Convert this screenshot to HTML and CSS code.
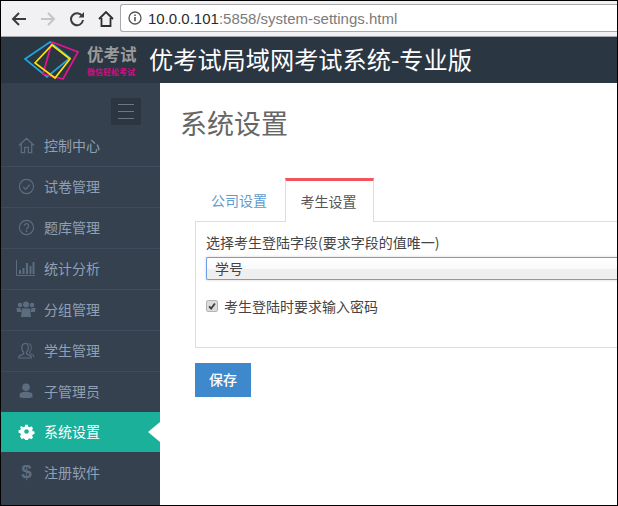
FILE: index.html
```html
<!DOCTYPE html>
<html lang="zh">
<head>
<meta charset="utf-8">
<title>系统设置</title>
<link rel="stylesheet" href="styles.css">
</head>
<body>
<div class="frame">
  <div class="browser">
    <div class="nav-icons">
      <svg class="nav-icon" viewBox="0 0 16 16"><path d="M15 8H2.5M8 2L2 8l6 6" fill="none" stroke="#3c3c3c" stroke-width="2"/></svg>
      <svg class="nav-icon" viewBox="0 0 16 16"><path d="M1 8h12.5M8 2l6 6-6 6" fill="none" stroke="#c4c5c7" stroke-width="2"/></svg>
      <svg class="nav-icon" viewBox="0 0 16 16"><path d="M13.2 5.2A6 6 0 1 0 14 9" fill="none" stroke="#3c3c3c" stroke-width="2"/><path d="M9.5 6.5H15V1z" fill="#3c3c3c"/></svg>
      <svg class="nav-icon" viewBox="0 0 16 16"><path d="M1 8l7-7 7 7M3.5 7v8h9V7" fill="none" stroke="#2e2e2e" stroke-width="1.8"/></svg>
    </div>
    <div class="omnibox">
      <svg class="info" viewBox="0 0 14 14"><circle cx="7" cy="7" r="6" fill="none" stroke="#555" stroke-width="1.3"/><path d="M6.2 6h1.6v4.3H6.2zM6.2 3.4h1.6V5H6.2z" fill="#555"/></svg>
      <span class="host">10.0.0.101</span><span class="path">:5858/system-settings.html</span>
    </div>
  </div>

  <header class="topbar">
    <svg class="logo" viewBox="24 40 56 40">
      <path d="M25 59L50 42 70 58 47 77z" fill="none" stroke="#22a5dc" stroke-width="1.700"/>
      <path d="M52 42L78 52 63 79 43 74z" fill="none" stroke="#e5148c" stroke-width="1.700"/>
      <path d="M35 63L52 45 70 59 55 78z" fill="none" stroke="#ffe600" stroke-width="1.700"/>
    </svg>
    <div class="brand">
      <span class="brand-name">优考试</span>
      <span class="brand-sub">微信轻松考试</span>
    </div>
    <h1 class="app-title">优考试局域网考试系统-专业版</h1>
  </header>

  <div class="workspace">
    <aside class="sidebar">
      <div class="toggle-row">
        <button class="toggle" type="button" aria-label="菜单"><span></span><span></span><span></span></button>
      </div>
      <nav>
        <a class="item">
          <svg class="ico" viewBox="0 0 18 18"><path d="M1 9l8-7.500L17 9M3.500 7.500V16.500h3.500V11h4v5.500h3.500V7.500" fill="none" stroke="#5d6d80" stroke-width="1.300"/></svg>控制中心</a>
        <a class="item">
          <svg class="ico" viewBox="0 0 18 18"><circle cx="9" cy="9" r="7.500" fill="none" stroke="#5d6d80" stroke-width="1.200"/><path d="M5.500 9.500l2.500 2.500 4.500-5" fill="none" stroke="#5d6d80" stroke-width="1.200"/></svg>试卷管理</a>
        <a class="item">
          <svg class="ico" viewBox="0 0 18 18"><circle cx="9" cy="9" r="7.500" fill="none" stroke="#5d6d80" stroke-width="1.200"/><path d="M6.700 7.200a2.300 2.300 0 1 1 3.600 1.900C9.400 9.700 9 10 9 11" fill="none" stroke="#5d6d80" stroke-width="1.300"/><path d="M8.200 12.200h1.600v1.600H8.200z" fill="#5d6d80"/></svg>题库管理</a>
        <a class="item">
          <svg class="ico wide" viewBox="0 0 20 18"><path d="M.5 1v15.500H19" fill="none" stroke="#5d6d80"/><path d="M3 11h2v4H3zM6.500 9h2v6h-2zM10 4h2v11h-2zM13.500 7h2v8h-2zM16.500 3h2v12h-2z" fill="#5d6d80"/></svg>统计分析</a>
        <a class="item">
          <svg class="ico wide" viewBox="0 0 20 18"><circle cx="4" cy="5" r="2.300" fill="#5d6d80"/><circle cx="16" cy="5" r="2.300" fill="#5d6d80"/><circle cx="10" cy="4.500" r="3" fill="#5d6d80"/><path d="M.5 8h4l1 4H1zM15.500 8h4l-.5 4h-4.500zM6 8.500h8l1 8.500H5z" fill="#5d6d80"/></svg>分组管理</a>
        <a class="item">
          <svg class="ico" viewBox="0 0 18 18"><path d="M8 1.500c-3 0-4.200 2.400-4 5 .2 2 1 3.500 2 4.500v1.500L1 15v2h13v-2l-5-2.500V11c1-1 1.800-2.500 2-4.500.2-2.600-1-5-3-5z" fill="none" stroke="#5d6d80" stroke-width="1.200"/><path d="M11 1.500c2.500.5 3.500 2.800 3 5.500-.2 1.200-.8 2.500-1.500 3.500v1.500l4 2v2" fill="none" stroke="#5d6d80" stroke-width="1"/></svg>学生管理</a>
        <a class="item">
          <svg class="ico" viewBox="0 0 18 18"><circle cx="8.500" cy="4.500" r="4" fill="#5d6d80"/><path d="M2.500 10.500q6-2.500 12 0 .800.500.800 2v2.500q-6.800 2-13.600 0v-2.500q0-1.500.800-2z" fill="#5d6d80"/></svg>子管理员</a>
        <a class="item active">
          <svg class="ico" viewBox="0 0 18 18"><path d="M7.400 1h3.200l.5 2.300 1.700.7 2-1.300 2.200 2.300-1.200 2 .7 1.700 2.200.5v3l-2.200.5-.7 1.700 1.200 2-2.200 2.200-2-1.200-1.700.7-.5 2.200H7.400l-.5-2.200-1.700-.7-2 1.200L1 14.900l1.200-2-.7-1.700L-.7 10.700v-3l2.200-.5.700-1.700-1.200-2L3.200 2.700l2 1.300 1.700-.7zM9 6.300a2.800 2.800 0 1 0 0 5.600 2.800 2.800 0 0 0 0-5.600z" fill="#fff" fill-rule="evenodd" transform="translate(1.200 1.100) scale(.87)"/></svg>系统设置</a>
        <a class="item last">
          <span class="dollar">$</span>注册软件</a>
      </nav>
    </aside>

    <main class="content">
      <h2 class="page-title">系统设置</h2>
      <div class="settings">
        <div class="tabs">
          <a class="tab">公司设置</a>
          <a class="tab current">考生设置</a>
        </div>
        <div class="panel">
          <label class="field-label" for="field">选择考生登陆字段(要求字段的值唯一)</label>
          <select class="select" id="field"><option>学号</option></select>
          <label class="check">
            <span class="box"><svg viewBox="0 0 12 12"><path d="M2.500 6.500l2.500 2.500 4.500-6" fill="none" stroke="#3f3f3f" stroke-width="2.200"/></svg></span>
            考生登陆时要求输入密码
          </label>
        </div>
        <button class="save" type="button">保存</button>
      </div>
    </main>
  </div>
</div>
</body>
</html>
```
FILE: styles.css
```css
* { box-sizing: border-box; }
html, body { margin: 0; padding: 0; background: #fff; }
body {
  width: 618px;
  height: 506px;
  overflow: hidden;
  font-family: "Noto Sans CJK SC", "Liberation Sans", sans-serif;
}
.frame {
  width: 618px;
  height: 506px;
  display: flex;
  flex-direction: column;
  border: 1px solid #000;
  overflow: hidden;
}
.browser {
  flex: 0 0 36px;
  display: flex;
  align-items: flex-start;
  background: #f1f1f3;
  border-bottom: 1px solid #a8a8a8;
}
.nav-icons {
  width: 119px;
  padding: 10px 0 0 10px;
  display: flex;
  gap: 13px;
  flex: none;
}
.nav-icon { width: 16px; height: 16px; flex: none; }
.omnibox {
  flex: 1;
  height: 28px;
  margin-top: 3px;
  border: 1px solid #a9a9a9;
  border-right: 0;
  border-radius: 3px 0 0 3px;
  background: #fff;
  display: flex;
  align-items: center;
  padding-left: 7px;
  font-family: "Liberation Sans", sans-serif;
  font-size: 15px;
  white-space: nowrap;
}
.info { width: 14px; height: 14px; margin-right: 6px; flex: none; }
.host { color: #2b2b2b; }
.path { color: #7b7b7b; }

.topbar {
  flex: 0 0 46px;
  background: #2b3643;
  display: flex;
  align-items: center;
  padding-left: 23px;
}
.logo { width: 56px; height: 40px; flex: none; }
.brand {
  width: 67px;
  margin-left: 7px;
  display: flex;
  flex-direction: column;
  line-height: 1;
  flex: none;
}
.brand-name { color: #9a9a9a; font-size: 16.500px; font-weight: 700; line-height: 20px; }
.brand-sub { color: #c8127f; font-size: 8px; font-weight: 700; line-height: 9px; margin-top: 3px; }
.app-title {
  margin: -2px 0 0 -5px;
  color: #fff;
  font-size: 24.200px;
  font-weight: 400;
  line-height: 30px;
  white-space: nowrap;
}

.workspace { flex: 1; display: flex; min-height: 0; }
.sidebar {
  flex: 0 0 159px;
  background: #364150;
}
.toggle-row {
  height: 43px;
  padding: 15px 19px 0 0;
  display: flex;
  justify-content: flex-end;
}
.toggle {
  width: 30px;
  height: 27px;
  padding: 6px 7px;
  border: 0;
  background: #2c3542;
  display: flex;
  flex-direction: column;
  justify-content: space-between;
}
.toggle span { display: block; height: 1px; width: 100%; background: #6d7784; }
.item {
  height: 41px;
  display: flex;
  align-items: center;
  padding: 0 0 2px 17px;
  color: #8fa0b5;
  font-size: 14px;
  border-bottom: 1px solid #3f4c5d;
}
.item.last { border-bottom: 0; padding-bottom: 2px; }
.ico { width: 17px; height: 17px; margin-right: 9px; flex: none; }
.ico.wide { width: 20px; height: 18px; margin-left: -2px; margin-right: 8px; }
.dollar {
  width: 17px;
  margin-right: 9px;
  flex: none;
  text-align: center;
  color: #5d6d80;
  font-family: "Liberation Sans", sans-serif;
  font-size: 19px;
  font-weight: 700;
  line-height: 24px;
}
.item.active {
  height: 40px;
  margin-top: -1px;
  background: #1bb099;
  color: #fff;
  border-bottom: 0;
  position: relative;
}
.item.active::after {
  content: "";
  position: absolute;
  right: 0;
  top: 50%;
  margin-top: -10px;
  border: 10px solid transparent;
  border-left: 0;
  border-right: 12px solid #fff;
}

.content { flex: 1; min-width: 0; padding-left: 20px; overflow: hidden; }
.page-title {
  margin: 20px 0 0;
  color: #666;
  font-size: 27px;
  font-weight: 400;
  line-height: 40px;
}
.settings { margin: 35px 0 0 15px; width: 460px; }
.tabs { display: flex; height: 44px; padding-left: 1px; }
.tab {
  width: 89px;
  height: 44px;
  display: flex;
  align-items: center;
  justify-content: center;
  padding-right: 3px;
  font-size: 14px;
  color: #5f9bce;
}
.tab.current {
  position: relative;
  z-index: 1;
  color: #555;
  background: #fff;
  border: 1px solid #ddd;
  border-top: 3px solid #f2545b;
  border-bottom: 0;
  height: 44px;
  padding: 0 2px 2px 0;
  margin-bottom: -1px;
}
.panel {
  height: 127px;
  margin-top: -1px;
  padding: 11px 0 0 10px;
  border: 1px solid #ddd;
  border-right: 0;
  display: flex;
  flex-direction: column;
}
.field-label { color: #444; font-size: 14px; line-height: 19px; }
.select {
  appearance: none;
  -webkit-appearance: none;
  width: 100%;
  height: 23px;
  margin-top: 5px;
  padding: 0 0 0 8px;
  border: 1px solid #6c9de8;
  border-right: 0;
  border-radius: 2px 0 0 2px;
  outline: 0;
  background: linear-gradient(#fff 0, #fafafa 50%, #efefef 52%, #efefef 100%);
  box-shadow: 0 0 3px rgba(0,0,0,.18);
  color: #444;
  font: 14px/21px "Noto Sans CJK SC", sans-serif;
}
.check {
  display: flex;
  align-items: center;
  margin-top: 16px;
  color: #444;
  font-size: 14px;
  line-height: 20px;
}
.box {
  width: 12px;
  height: 12px;
  margin-right: 6px;
  border: 1px solid #b4b4b4;
  border-radius: 2px;
  background: #dcdcdc;
  display: block;
  flex: none;
}
.box svg { display: block; width: 10px; height: 10px; }
.save {
  display: block;
  width: 56px;
  height: 34px;
  margin-top: 15px;
  padding: 0 0 3px;
  border: 0;
  background: #3e89cb;
  color: #fff;
  font: 500 14px "Noto Sans CJK SC", sans-serif;
}
```
